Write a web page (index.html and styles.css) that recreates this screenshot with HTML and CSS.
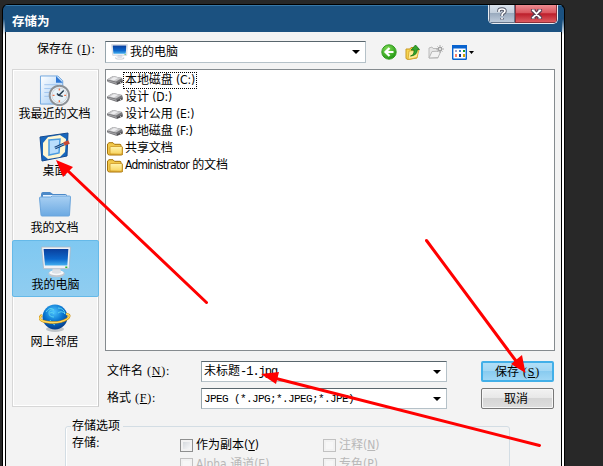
FILE: index.html
```html
<!DOCTYPE html>
<html lang="zh-CN">
<head>
<meta charset="utf-8">
<title>存储为</title>
<link rel="stylesheet" href="styles.css">
</head>
<body>
<svg class="defs" width="0" height="0" aria-hidden="true">
  <defs>
    <linearGradient id="blue" x1="0" y1="0" x2="0" y2="1"><stop offset="0" stop-color="#0a3f9c"/><stop offset=".6" stop-color="#0c67cb"/><stop offset="1" stop-color="#45b0f0"/></linearGradient>
    <linearGradient id="folderBlue" x1="0" y1="0" x2="0" y2="1"><stop offset="0" stop-color="#a9d0f3"/><stop offset="1" stop-color="#6ba9e2"/></linearGradient>
    <linearGradient id="folderGold" x1="0" y1="0" x2="0" y2="1"><stop offset="0" stop-color="#fff5b0"/><stop offset="1" stop-color="#f8d35c"/></linearGradient>
    <linearGradient id="paper" x1="0" y1="0" x2="1" y2="1"><stop offset="0" stop-color="#fff"/><stop offset="1" stop-color="#9bc8f5"/></linearGradient>
    <radialGradient id="ball" cx=".45" cy=".3" r=".7"><stop offset="0" stop-color="#4dc5ff"/><stop offset=".55" stop-color="#0874cf"/><stop offset="1" stop-color="#053b88"/></radialGradient>
    <radialGradient id="green" cx=".4" cy=".3" r=".7"><stop offset="0" stop-color="#83dd58"/><stop offset="1" stop-color="#229814"/></radialGradient>
  </defs>
  <symbol id="drive" viewBox="0 0 16 12">
    <path d="M0 4.500 6 1l9 2 1 3v1.500L10 10 1 7 0 6z" fill="#77777a"/>
    <path d="M0 4.500 6 1l9 2-6 3.500z" fill="#c5c5c7"/>
    <path d="m3 4.500 4-2.500 4 1-4 2.500z" fill="#ececee"/>
    <path d="m1 6 8 2v1.500" fill="none" stroke="#a5a5a8"/>
    <path d="m10 8 5-2v1.500l-5 2z" fill="#4d4d50"/><path d="M13 7.500h1" stroke="#bbb"/>
  </symbol>
  <symbol id="folder" viewBox="0 0 16 14">
    <path d="M.5 11V2L2 .7h4L7.500 2.300H13q1 0 1 1V5h1q.8 0 .8 1v5.500q0 1.500-1.500 1.500H2.500Q.5 13 .5 11z" fill="#f1c84a" stroke="#a7730a"/>
    <path d="M3 12V5.500Q3 4.500 4 4.500h10.500q.7 0 .7.700v5.800q0 1.300-1.300 1.300z" fill="url(#folderGold)" stroke="#c58d18" stroke-width=".7"/>
  </symbol>
  <symbol id="monitor" viewBox="0 0 30 31">
    <ellipse cx="15.500" cy="27" rx="8" ry="3.200" fill="#c1c7cf"/><ellipse cx="15.500" cy="26" rx="7" ry="2.400" fill="#f8f8fa"/>
    <path d="M12 21h7l1 5q-4.500 2-9 0z" fill="#dde1e7"/>
    <path d="M1 1h28l-1.300 21H3z" fill="#f0f2f5" stroke="#acb7c6" stroke-width=".8"/>
    <path d="M3 3h24l-1 16H4.300z" fill="url(#blue)"/><path d="M24 20.500h2" stroke="#30b330" stroke-width="1.500"/>
  </symbol>
</svg>

<main class="window">
  <header class="titlebar">
    <h1>存储为</h1>
    <div class="controls">
      <button class="help" aria-label="帮助"><svg width="12" height="14" viewBox="0 0 12 14"><path d="M3 5V3.500Q3 2 6 2t3 2q0 1.500-2 2.300Q6 7 6 9M6 11v1.500" fill="none" stroke="#505464" stroke-width="3.400"/><path d="M3 5V3.500Q3 2 6 2t3 2q0 1.500-2 2.300Q6 7 6 9M6 10.800v1.500" fill="none" stroke="#fff" stroke-width="1.700"/></svg></button>
      <button class="close" aria-label="关闭"><svg width="13" height="12" viewBox="0 0 14 12"><path d="m3 2 8 8m0-8-8 8" stroke="#5b3c50" stroke-width="4.600"/><path d="M1 2h5m2 0h5M1 10h5m2 0h5" stroke="#5b3c50" stroke-width="3"/><path d="m3.300 2 7.400 8m0-8-7.400 8M2 2h3m4 0h3M2 10h3m4 0h3" stroke="#fff" stroke-width="1.900"/></svg></button>
    </div>
  </header>

  <div class="content">
    <div class="lookin">
      <span class="label">保存在<span class="key">(<u>I</u>):</span></span>
      <div class="combo"><svg width="17" height="16" viewBox="0 0 30 31" preserveAspectRatio="none"><use href="#monitor"/></svg><span>我的电脑</span><i class="caret"></i></div>
      <div class="tools">
        <svg width="16" height="16" viewBox="0 0 16 16"><circle cx="8" cy="8" r="7.200" fill="url(#green)" stroke="#369e23"/><path d="M12.500 8H5m3.500-4-4 4 4 4" fill="none" stroke="#fff" stroke-width="2.200"/></svg>
        <svg width="15" height="16" viewBox="0 0 15 16"><path d="M1 5h4l1-1.500h6V14l-9 1.500-2-1z" fill="#f7d552" stroke="#c89921"/><path d="m4 7 10-1-2 7.500-9 2z" fill="#ffeb91" stroke="#d5a52b" stroke-width=".8"/><path d="M5.500 12q4-1 3.500-6H6l4.500-5 4 4.500h-2.200q0 6-6.800 6.500z" fill="#35a52d" stroke="#197717" stroke-width=".8"/></svg>
        <svg width="16" height="16" viewBox="0 0 16 16"><path d="M1 13V4l3-1 1 1.500h5V14H1z" fill="#e7e7e7" stroke="#bbb"/><path d="m1 14 3-6.500 9-.5-3 6.500z" fill="#f2f2f2" stroke="#b8b8b8"/><path d="M12 1v8M8 5h8M9.500 2.500l5 5m0-5-5 5" stroke="#aaa"/><circle cx="12" cy="5" r="1.500" fill="#fff" stroke="#999"/></svg>
        <svg class="views" width="23" height="15" viewBox="0 0 23 15"><rect x=".7" y=".7" width="13.600" height="13.600" rx=".6" fill="#fff" stroke="#0863cf" stroke-width="1.400"/><path d="M0 0h15v3.500H0z" fill="#0863cf"/><path d="M3 5h2v2H3z" fill="#a4a0ca"/><path d="M7 5h2v2H7z" fill="#367fd0"/><path d="M11 5h2v2h-2z" fill="#119626"/><path d="M3 9h2v3H3z" fill="#ff8064"/><path d="M7 9h2v3H7z" fill="#0b338e"/><path d="M11 9h2v3h-2z" fill="#d3a100"/><path d="M17 6h5l-2.500 3z" fill="#000"/></svg>
      </div>
    </div>

    <div class="browser">
      <nav class="places">
        <div class="place"><svg width="32" height="33" viewBox="0 0 32 33"><path d="M1 1h18l5 5v24H1z" fill="url(#paper)" stroke="#6fa6df"/><path d="M17 1v7h7z" fill="#2f78d5"/><path d="M5 10h14M5 14h10M5 18h8M5 22h7" stroke="#9fc4ee"/><circle cx="20.500" cy="21" r="10" fill="#f4f8fb" stroke="#8c9196" stroke-width="2"/><circle cx="20.500" cy="21" r="7.700" fill="#e7f2f8" stroke="#c9d3da"/><path d="M20.500 14v2m0 10v2m-7-7h2m10 0h2" stroke="#ed7448" stroke-width="1.500"/><path d="m25 16-5 5 4 1m-4-1-2-2" fill="none" stroke="#263d50" stroke-width="1.500"/></svg><span>我最近的文档</span></div>
        <div class="place"><svg width="32" height="32" viewBox="0 0 32 32"><path d="m1 6 28-4-1 23-25 5z" fill="#1767bd" stroke="#154b91"/><path d="m4 12 5-6 12-2 6 4-1 13-5 5-12 2-5-4z" fill="#fff7d3"/><path d="m10 9 11-1-1 14-10 2z" fill="#b9defd" stroke="#4a9be0" stroke-width="1.500"/><path d="m16 17 9-4" stroke="#173c71" stroke-width="3"/><path d="m16 17 9-4" stroke="#78b5ea"/><path d="m25 13 5-2" stroke="#c74a34" stroke-width="4"/></svg><span>桌面</span></div>
        <div class="place"><svg width="32" height="32" viewBox="0 0 32 32"><path d="M2 7q0-3 2-3h7l3 2h12q2 0 2 2v17H3z" fill="#4c89c8"/><path d="M4 7h23v3H4z" fill="#e8f4ff"/><path d="M.500 10q0-1 1-1h10l2-1h17q1 0 1 1l-1 18q0 1-1 1H3q-1 0-1-1z" fill="url(#folderBlue)" stroke="#6ba5dc"/></svg><span>我的文档</span></div>
        <div class="place selected"><svg width="32" height="32" viewBox="0 0 30 31"><use href="#monitor"/></svg><span>我的电脑</span></div>
        <div class="place"><svg width="32" height="32" viewBox="0 0 32 32"><ellipse cx="16" cy="27" rx="9" ry="3" fill="#bfc4c8"/><circle cx="16" cy="15" r="12.500" fill="url(#ball)"/><path d="M7 10q4-6 8-2-5-1-5 3t5 4m4-9q6 0 7 6-3-4-7-1m-8 7q2 4 5 5m4-3q3 1 5-2M11 11q3-2 4 1" fill="none" stroke="#59d0ef" stroke-width="1"/><path d="M3 13q-6 5 5 7 12 2 20-3 5-4-1-5" fill="none" stroke="#c98b0b" stroke-width="2.500"/><path d="M3 13q-6 5 5 7 12 2 20-3 5-4-1-5" fill="none" stroke="#ffda61" stroke-width="1.400"/></svg><span>网上邻居</span></div>
      </nav>

      <section class="files">
        <ul class="list">
          <li><svg width="16" height="12"><use href="#drive"/></svg><span class="focused">本地磁盘 (C:)</span></li>
          <li><svg width="16" height="12"><use href="#drive"/></svg><span>设计 (D:)</span></li>
          <li><svg width="16" height="12"><use href="#drive"/></svg><span>设计公用 (E:)</span></li>
          <li><svg width="16" height="12"><use href="#drive"/></svg><span>本地磁盘 (F:)</span></li>
          <li><svg width="16" height="14"><use href="#folder"/></svg><span>共享文档</span></li>
          <li><svg width="16" height="14"><use href="#folder"/></svg><span><span class="latin">Administrator</span> 的文档</span></li>
        </ul>
        <div class="fields">
          <span class="label">文件名<span class="key">(<u>N</u>):</span></span>
          <div class="combo name"><span>未标题<span class="mono">-1.jpg</span></span><i class="caret"></i></div>
          <button class="save">保存<span class="key">(<u>S</u>)</span></button>
          <span class="label">格式<span class="key">(<u>F</u>):</span></span>
          <div class="combo format"><span class="mono">JPEG (*.JPG;*.JPEG;*.JPE)</span><i class="caret"></i></div>
          <button class="cancel">取消</button>
        </div>
      </section>
    </div>

    <fieldset class="options">
      <legend>存储选项</legend>
      <div class="checks">
        <span class="heading">存储:</span>
        <label><i class="box"></i><span>作为副本(<u>Y</u>)</span></label>
        <label class="disabled"><i class="box"></i><span>注释(<u>N</u>)</span></label>
        <span></span>
        <label class="disabled"><i class="box"></i><span>Alpha 通道(<u>E</u>)</span></label>
        <label class="disabled"><i class="box"></i><span>专色(<u>P</u>)</span></label>
      </div>
    </fieldset>
  </div>
</main>

<svg class="arrows" width="603" height="466" viewBox="0 0 603 466" fill="red" stroke="red" stroke-linecap="round">
  <path d="M67 170 206.500 302.500M519 365 426.500 240.500M276 378.500 539.500 445.500" stroke-width="3" fill="none"/>
  <path d="m56 160 17 7-10 10zM525.500 373l-14.500-9 11-9zM261 374l18-2-3 12z" stroke="none"/>
</svg>
</body>
</html>
```
FILE: styles.css
```css
* { box-sizing: border-box; }
body {
  margin: 0;
  padding: 4px 0 0 2px;
  height: 466px;
  overflow: hidden;
  background: #282828;
  color: #000;
  font: 12px/16px "DejaVu Sans Condensed", "Noto Sans CJK SC", sans-serif;
}
.defs { position: absolute; }
button { font: inherit; padding: 0; margin: 0; color: inherit; }
span { white-space: nowrap; }
svg { flex: none; }

.window {
  width: 563px;
  height: 462px;
  overflow: hidden;
  border: 1px solid #000;
  border-bottom: 0;
  border-radius: 6px 6px 0 0;
  background: linear-gradient(#1b5180 0 14px, #fff 30px);
}
.titlebar {
  height: 27px;
  margin: 0 2px;
  display: flex;
  justify-content: space-between;
  background: #1b5180;
  box-shadow: inset 0 1px #3778a8;
}
h1 {
  margin: 7px 0 0 7px;
  color: #fff;
  font: bold 12.500px/18px "Noto Sans CJK SC", sans-serif;
}
.controls {
  display: flex;
  width: 70px;
  height: 19px;
  margin-right: 4px;
  border: 1px solid #e9edf3;
  border-top: 0;
  border-radius: 0 0 5px 5px;
  overflow: hidden;
}
.controls button {
  display: grid;
  place-items: center;
  border: 1px solid #67758a;
  border-top: 0;
}
.help { width: 26px; background: linear-gradient(#dbe2eb, #c3cfdc 45%, #9aabbe 50%, #bdcada); }
.controls .close { flex: 1; border-color: #8c3039; background: linear-gradient(#ed8c91, #da5860 45%, #bd1f2b 52%, #dc5b60); }

.content {
  height: 434px;
  margin: 0 2px;
  border: solid #000;
  border-width: 0 1px;
  background: #f3f3f3;
}
.lookin {
  display: flex;
  height: 37px;
  padding-top: 9px;
}
.lookin > .label { width: 99px; padding-left: 31px; }
.key { margin-left: 4px; font-family: "Liberation Serif", serif; font-size: 12px; letter-spacing: .8px; }
.mono { font-family: "Liberation Mono", monospace; font-size: 11px; letter-spacing: -.6px; }
u { text-underline-offset: 1px; }
.combo {
  display: flex;
  align-items: center;
  justify-content: space-between;
  width: 261px;
  height: 22px;
  padding: 0 5px;
  background: #fff;
  border: 1px solid #b5c1c8;
  border-top-color: #59666d;
  border-left-color: #96a4ab;
}
.lookin .combo > span { flex: 1; margin-left: 2px; }
.caret { width: 0; height: 0; border: 4px solid transparent; border-top-color: #000; border-bottom: 0; }
.tools { display: flex; gap: 8px; align-items: center; margin: 0 0 6px 15px; }

.browser { display: flex; height: 338px; padding-left: 6px; gap: 6px; }
.places {
  width: 87px;
  border: 1px solid #d7d7d7;
  border-right: 1px solid #c8c8c8;
  box-shadow: inset -1px -1px #fff, inset 1px 1px #fff;
}
.place {
  display: flex;
  flex-direction: column;
  align-items: center;
  height: 57px;
  margin: 0 -1px;
  padding-top: 5px;
}
.place:first-child { margin-top: -1px; padding-top: 6px; }
.place svg { height: 32px; margin-right: 2px; }
.place span { margin: -1px 2px 0 0; }
.place:nth-child(n+2) span { margin-top: 0; }
.place.selected {
  border: 1px solid #65b9e8;
  border-radius: 2px;
  background: linear-gradient(#7fc8f1, #90cdf0);
  padding-top: 5px;
}
.selected svg { margin-right: 0; }
.place.selected span { margin: -1px 0 0; }
.files { width: 450px; }
.list {
  height: 282px;
  margin: 0;
  padding: 2px 1px;
  list-style: none;
  border: 1px solid #858b8f;
  background: #fff;
}
.list li { display: flex; align-items: center; height: 17px; gap: 1px; }
.list li > span { padding: 0 1px; line-height: 15px; letter-spacing: -.1px; }
.list .focused { outline: 1px dotted #000; }
.latin { letter-spacing: -.75px; }
.fields {
  display: grid;
  grid-template-columns: 96px 246px 73px;
  grid-template-rows: 21px 21px;
  row-gap: 6px;
  padding-top: 10px;
}
.fields .label { padding-left: 2px; margin-top: 2px; }
.fields .combo { width: 246px; height: 21px; padding-left: 2px; }
.fields .name .mono { font-size: 12px; letter-spacing: -1px; }
.fields button { margin-left: 34px; width: 73px; height: 21px; border-radius: 2px; }
.save { border: 2px solid #42afe8; background: linear-gradient(#b1def6, #a2d7f4 45%, #89cbf0 50%, #a0d7f5); }
.fields .cancel { padding-right: 3px; border: 1px solid #777; background: linear-gradient(#f2f2f2, #e8e8e8 45%, #d5d5d5 50%, #dedede); box-shadow: inset 0 0 0 1px #f7f7f7; }

.options {
  width: 445px;
  height: 60px;
  margin: 11px 0 0 59px;
  padding: 0 5px;
  border: 1px solid #d3dde4;
  border-radius: 3px;
  box-shadow: inset 1px 0 #fff;
}
.options legend { height: 16px; padding: 0 3px 0 1px; }
.checks { display: grid; grid-template-columns: 109px 143px 150px; row-gap: 3px; padding-top: 3px; }
.heading { margin: -2px 0 0 1px; }
.checks label { display: flex; align-items: center; gap: 3px; }
.box { width: 13px; height: 13px; border: 1px solid #8e8f8f; background: linear-gradient(135deg, #ccd1d6, #fff); box-shadow: inset 0 0 0 2px #f2f2f2; }
.disabled { color: #b8b8b8; }
.disabled .box { border-color: #c1c1c1; background: #f7f7f7; }

/* Annotation layer over the dialog */
.arrows { position: absolute; left: 0; top: 0; pointer-events: none; }
```
